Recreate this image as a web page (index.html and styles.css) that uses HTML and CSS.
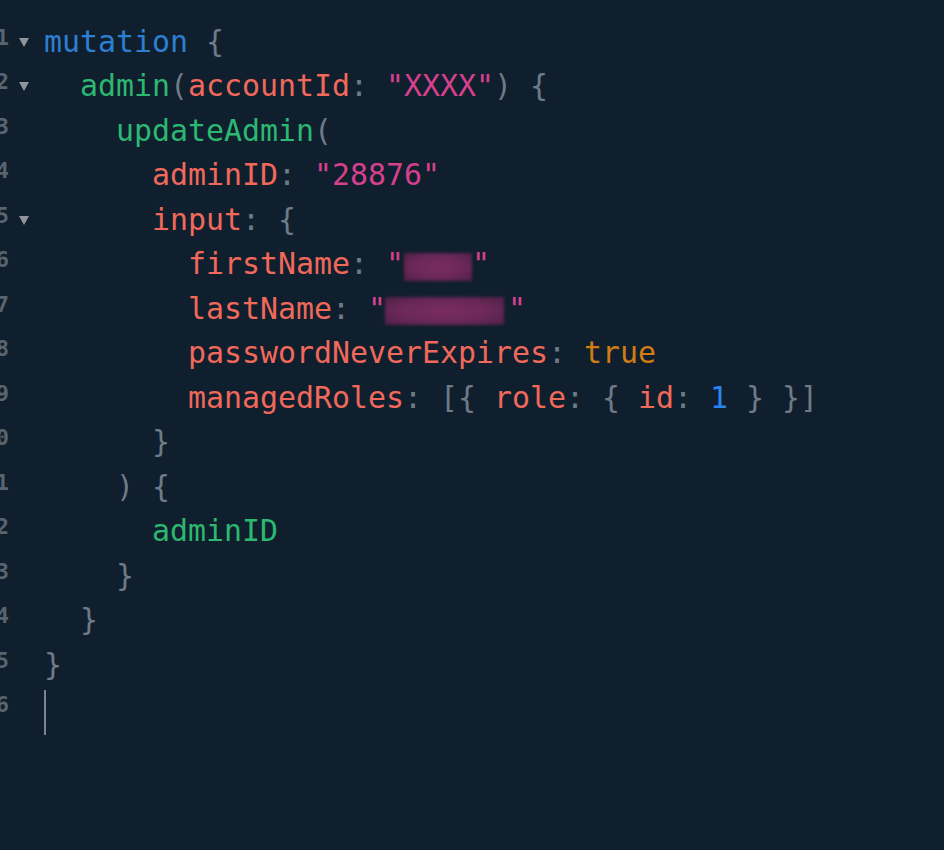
FILE: index.html
```html
<!DOCTYPE html>
<html>
<head>
<meta charset="utf-8">
<link rel="stylesheet" href="styles.css">
</head>
<body>
<div class="editor">
  <div class="line"><div class="gutter"><span class="num">1</span><span class="fold open"></span></div><pre class="code"><span class="kw">mutation</span> <span class="p">{</span></pre></div>
  <div class="line"><div class="gutter"><span class="num">2</span><span class="fold open"></span></div><pre class="code">  <span class="fn">admin</span><span class="p">(</span><span class="at">accountId</span><span class="p">:</span> <span class="st">"XXXX"</span><span class="p">)</span> <span class="p">{</span></pre></div>
  <div class="line"><div class="gutter"><span class="num">3</span><span class="fold"></span></div><pre class="code">    <span class="fn">updateAdmin</span><span class="p">(</span></pre></div>
  <div class="line"><div class="gutter"><span class="num">4</span><span class="fold"></span></div><pre class="code">      <span class="at">adminID</span><span class="p">:</span> <span class="st">"28876"</span></pre></div>
  <div class="line"><div class="gutter"><span class="num">5</span><span class="fold open"></span></div><pre class="code">      <span class="at">input</span><span class="p">:</span> <span class="p">{</span></pre></div>
  <div class="line"><div class="gutter"><span class="num">6</span><span class="fold"></span></div><pre class="code">        <span class="at">firstName</span><span class="p">:</span> <span class="st">"<span class="redact redact-short"></span>"</span></pre></div>
  <div class="line"><div class="gutter"><span class="num">7</span><span class="fold"></span></div><pre class="code">        <span class="at">lastName</span><span class="p">:</span> <span class="st">"<span class="redact redact-long"></span>"</span></pre></div>
  <div class="line"><div class="gutter"><span class="num">8</span><span class="fold"></span></div><pre class="code">        <span class="at">passwordNeverExpires</span><span class="p">:</span> <span class="bool">true</span></pre></div>
  <div class="line"><div class="gutter"><span class="num">9</span><span class="fold"></span></div><pre class="code">        <span class="at">managedRoles</span><span class="p">:</span> <span class="p">[{</span> <span class="at">role</span><span class="p">:</span> <span class="p">{</span> <span class="at">id</span><span class="p">:</span> <span class="nm">1</span> <span class="p">}</span> <span class="p">}]</span></pre></div>
  <div class="line"><div class="gutter"><span class="num">10</span><span class="fold"></span></div><pre class="code">      <span class="p">}</span></pre></div>
  <div class="line"><div class="gutter"><span class="num">11</span><span class="fold"></span></div><pre class="code">    <span class="p">)</span> <span class="p">{</span></pre></div>
  <div class="line"><div class="gutter"><span class="num">12</span><span class="fold"></span></div><pre class="code">      <span class="fn">adminID</span></pre></div>
  <div class="line"><div class="gutter"><span class="num">13</span><span class="fold"></span></div><pre class="code">    <span class="p">}</span></pre></div>
  <div class="line"><div class="gutter"><span class="num">14</span><span class="fold"></span></div><pre class="code">  <span class="p">}</span></pre></div>
  <div class="line"><div class="gutter"><span class="num">15</span><span class="fold"></span></div><pre class="code"><span class="p">}</span></pre></div>
  <div class="line"><div class="gutter"><span class="num">16</span><span class="fold"></span></div><pre class="code"><span class="cursor"></span></pre></div>
</div>
</body>
</html>
```
FILE: styles.css
```css
html, body {
  margin: 0;
  padding: 0;
  background: #0f1f2d;
  width: 944px;
  height: 850px;
  overflow: hidden;
}

.editor {
  padding-top: 23px;
  display: flex;
  flex-direction: column;
}

.line {
  display: flex;
  height: 44.47px;
}

.gutter {
  width: 44px;
  flex: none;
  display: flex;
  align-items: flex-start;
}

.num {
  width: 9px;
  flex: none;
  display: flex;
  justify-content: flex-end;
  font-family: "DejaVu Sans Mono", monospace;
  font-weight: bold;
  font-size: 22px;
  line-height: 22px;
  color: #5a646e;
  white-space: nowrap;
  margin-top: 4px;
}

.fold {
  width: 11px;
  height: 9px;
  margin-left: 10px;
  margin-top: 15px;
  box-sizing: border-box;
}

.fold.open {
  width: 0;
  height: 0;
  border-left: 5.5px solid transparent;
  border-right: 5.5px solid transparent;
  border-top: 9px solid #8e959c;
}

.code {
  margin: 0;
  font-family: "DejaVu Sans Mono", monospace;
  font-size: 29.9px;
  line-height: 38.5px;
  height: 44.47px;
  color: #6c7a86;
  white-space: pre;
}

.kw { color: #2d7fd4; }
.fn { color: #2db872; }
.at { color: #f0695b; }
.st { color: #d6408c; }
.p { color: #6d7b87; }
.bool { color: #d27c13; }
.nm { color: #2a84f2; }

.redact {
  display: inline-block;
  height: 28px;
  vertical-align: middle;
  background: radial-gradient(ellipse at center, #7a2c62 0%, #6a2858 55%, #4e2048 100%);
  filter: blur(1.5px);
  position: relative;
  top: 1px;
}

.redact-short {
  width: 68px;
}

.redact-long {
  width: 119px;
  margin-left: -1px;
  margin-right: 4px;
}

.cursor {
  display: inline-block;
  width: 2px;
  height: 45px;
  vertical-align: top;
  background: #7a858e;
}
```
